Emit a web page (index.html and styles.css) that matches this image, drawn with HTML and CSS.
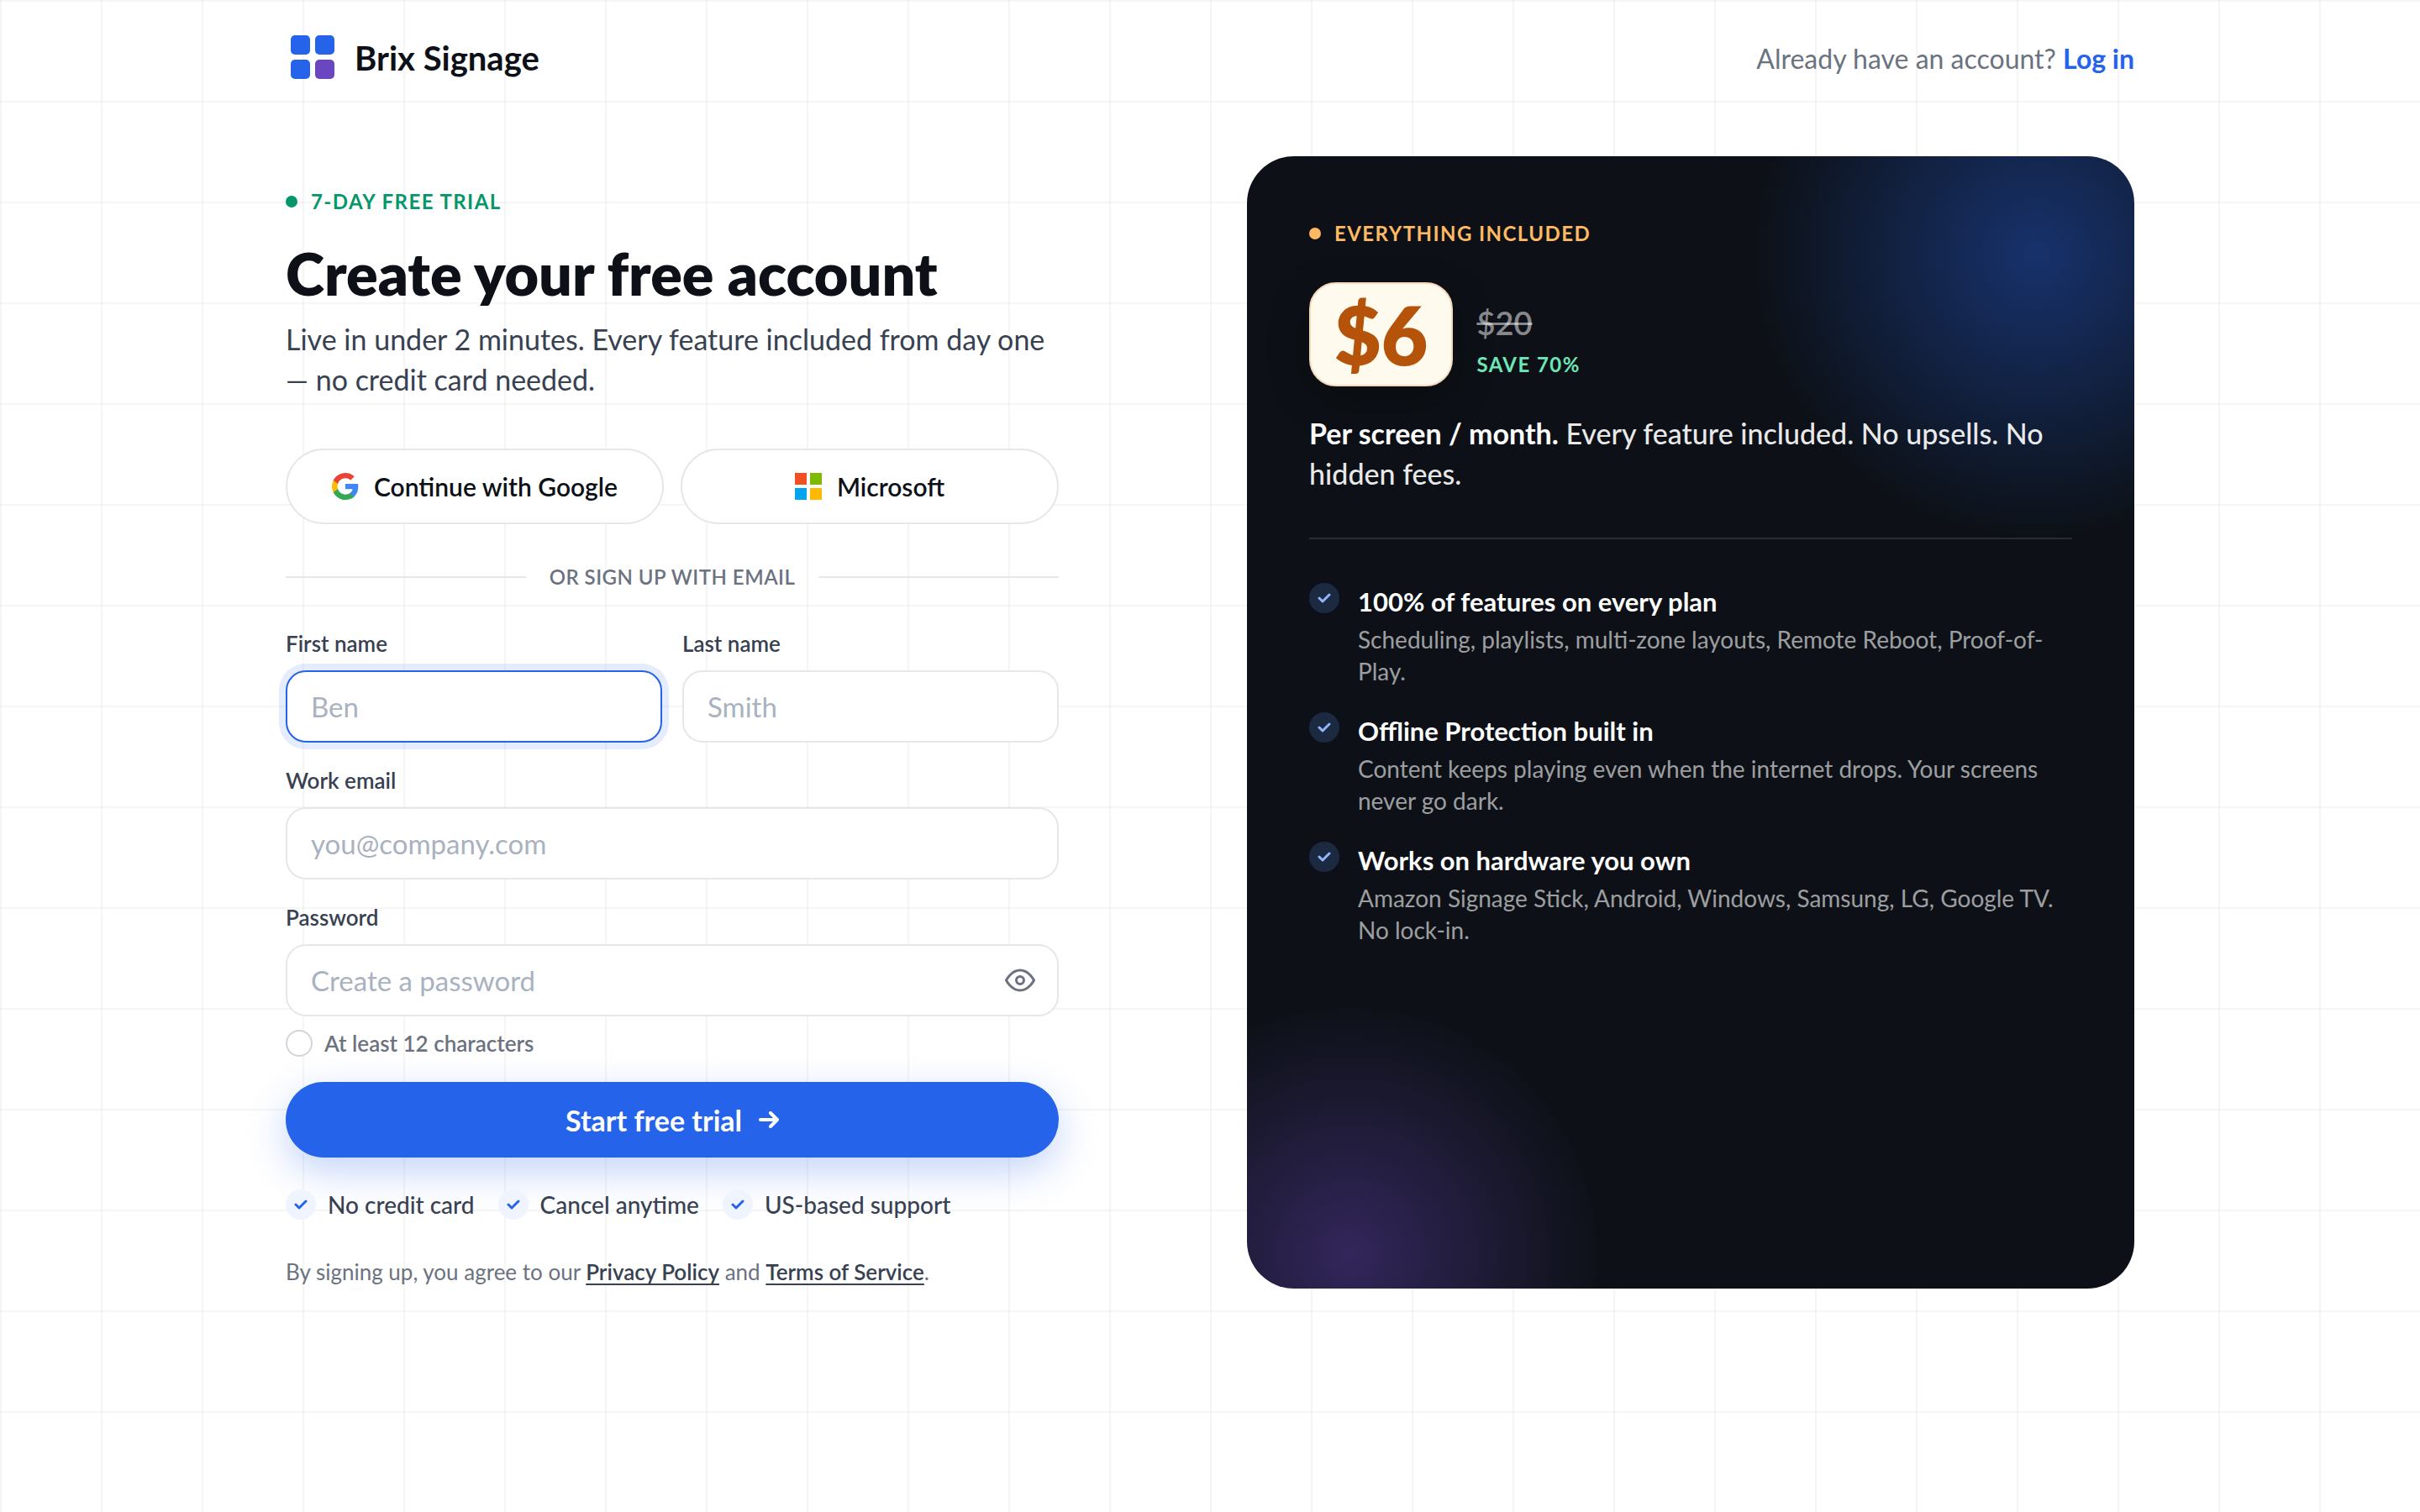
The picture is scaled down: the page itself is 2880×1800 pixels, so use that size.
FILE: index.html
```html
<!DOCTYPE html>
<html lang="en">

<head>
    <meta charset="utf-8">
    <title>Brix Signage - Create your free account</title>
    <meta name="viewport" content="width=device-width, initial-scale=1">
    <link rel="stylesheet" href="styles.css">
</head>

<body>

    <header class="header container">
        <a class="brand" href="#">
            <svg class="brand-logo" viewBox="0 0 64 64" aria-hidden="true">
                <rect x="6" y="5" width="23" height="23" rx="5" fill="#2563eb"/>
                <rect x="35" y="5" width="23" height="23" rx="5" fill="#2563eb"/>
                <rect x="6" y="34" width="23" height="23" rx="5" fill="#2563eb"/>
                <rect x="35" y="34" width="23" height="23" rx="5" fill="#6b46c1"/>
            </svg>
            Brix Signage
        </a>
        <p class="header-login">Already have an account? <a href="#">Log in</a></p>
    </header>

    <main class="signup container">
        <section class="signup-main">
            <p class="eyebrow eyebrow-green">7-DAY FREE TRIAL</p>
            <h1>Create your free account</h1>
            <p class="lead">Live in under 2 minutes. Every feature included from day one — no credit card needed.</p>

            <div class="oauth">
                <button type="button" class="btn-oauth">
                    <svg viewBox="1 1 22 22" aria-hidden="true">
                        <path fill="#4285F4" d="M22.56 12.25c0-.78-.07-1.53-.2-2.25H12v4.26h5.92c-.26 1.37-1.04 2.53-2.21 3.31v2.77h3.57c2.08-1.92 3.28-4.74 3.28-8.09z"/>
                        <path fill="#34A853" d="M12 23c2.97 0 5.46-.98 7.28-2.66l-3.57-2.77c-.98.66-2.23 1.06-3.71 1.06-2.86 0-5.29-1.93-6.16-4.53H2.18v2.84C3.99 20.53 7.7 23 12 23z"/>
                        <path fill="#FBBC05" d="M5.84 14.09c-.22-.66-.35-1.36-.35-2.09s.13-1.43.35-2.09V7.07H2.18C1.43 8.55 1 10.22 1 12s.43 3.45 1.18 4.93l2.85-2.22.81-.62z"/>
                        <path fill="#EA4335" d="M12 5.38c1.62 0 3.06.56 4.21 1.64l3.15-3.15C17.45 2.09 14.97 1 12 1 7.7 1 3.99 3.47 2.18 7.07l3.66 2.84c.87-2.6 3.3-4.53 6.16-4.53z"/>
                    </svg>
                    Continue with Google
                </button>
                <button type="button" class="btn-oauth">
                    <svg viewBox="0 0 32 32" aria-hidden="true">
                        <path fill="#f25022" d="M0 0h14v14H0z"/>
                        <path fill="#7fba00" d="M18 0h14v14H18z"/>
                        <path fill="#00a4ef" d="M0 18h14v14H0z"/>
                        <path fill="#ffb900" d="M18 18h14v14H18z"/>
                    </svg>
                    Microsoft
                </button>
            </div>

            <div class="divider">OR SIGN UP WITH EMAIL</div>

            <form action="">
                <div class="fields">
                    <div class="field-row">
                        <div class="field">
                            <label for="first-name">First name</label>
                            <input class="active" type="text" id="first-name" placeholder="Ben">
                        </div>
                        <div class="field">
                            <label for="last-name">Last name</label>
                            <input type="text" id="last-name" placeholder="Smith">
                        </div>
                    </div>
                    <div class="field">
                        <label for="email">Work email</label>
                        <input type="email" id="email" placeholder="you@company.com">
                    </div>
                    <div class="field">
                        <label for="password">Password</label>
                        <div class="password">
                            <input type="password" id="password" placeholder="Create a password">
                            <button type="button" class="password-toggle" aria-label="Show password">
                                <svg viewBox="0 0 24 24" fill="none" stroke="currentColor" stroke-width="2" stroke-linecap="round" stroke-linejoin="round">
                                    <path d="M1 12s4-8 11-8 11 8 11 8-4 8-11 8-11-8-11-8z"/>
                                    <circle cx="12" cy="12" r="3"/>
                                </svg>
                            </button>
                        </div>
                    </div>
                </div>

                <p class="requirement">At least 12 characters</p>

                <button class="btn-submit">
                    Start free trial
                    <svg viewBox="0 0 24 20" fill="none" stroke="currentColor" stroke-width="4" stroke-linecap="round" stroke-linejoin="round" aria-hidden="true">
                        <path d="M2 10h20M14 2l8 8-8 8"/>
                    </svg>
                </button>
            </form>

            <ul class="trust">
                <li><span class="check"><svg viewBox="0 0 16 12"><path d="M2 6l4 4 8-8"/></svg></span>No credit card</li>
                <li><span class="check"><svg viewBox="0 0 16 12"><path d="M2 6l4 4 8-8"/></svg></span>Cancel anytime</li>
                <li><span class="check"><svg viewBox="0 0 16 12"><path d="M2 6l4 4 8-8"/></svg></span>US-based support</li>
            </ul>

            <p class="legal">By signing up, you agree to our <a href="#">Privacy Policy</a> and <a href="#">Terms of Service</a>.</p>
        </section>

        <aside class="offer">
            <p class="eyebrow eyebrow-amber">EVERYTHING INCLUDED</p>
            <div class="price">
                <div class="price-badge">$6</div>
                <div class="price-side">
                    <s>$20</s>
                    <span class="price-save">SAVE 70%</span>
                </div>
            </div>
            <p class="offer-text"><strong>Per screen / month.</strong> Every feature included. No upsells. No hidden fees.</p>
            <ul class="features">
                <li>
                    <span class="check check-dark"><svg viewBox="0 0 16 12"><path d="M2 6l4 4 8-8"/></svg></span>
                    <div>
                        <h2>100% of features on every plan</h2>
                        <p>Scheduling, playlists, multi-zone layouts, Remote Reboot, Proof-of-Play.</p>
                    </div>
                </li>
                <li>
                    <span class="check check-dark"><svg viewBox="0 0 16 12"><path d="M2 6l4 4 8-8"/></svg></span>
                    <div>
                        <h2>Offline Protection built in</h2>
                        <p>Content keeps playing even when the internet drops. Your screens never go dark.</p>
                    </div>
                </li>
                <li>
                    <span class="check check-dark"><svg viewBox="0 0 16 12"><path d="M2 6l4 4 8-8"/></svg></span>
                    <div>
                        <h2>Works on hardware you own</h2>
                        <p>Amazon Signage Stick, Android, Windows, Samsung, LG, Google TV. No lock-in.</p>
                    </div>
                </li>
            </ul>
        </aside>
    </main>

</body>

</html>
```
FILE: styles.css
```css
*,
*::before,
*::after {
    margin: 0;
    padding: 0;
    box-sizing: border-box;
}

body {
    font-family: Lato, "Open Sans", sans-serif;
    font-size: 32px;
    color: #0d1117;
    min-height: 100vh;
    background-color: #ffffff;
    background-image:
        linear-gradient(rgba(13, 17, 23, 0.04) 2px, transparent 2px),
        linear-gradient(90deg, rgba(13, 17, 23, 0.04) 2px, transparent 2px);
    background-size: 120px 120px;
}

ul {
    list-style: none;
}

button,
input {
    font-family: inherit;
}

button {
    cursor: pointer;
}

.container {
    width: 100%;
    max-width: 2280px;
    margin: 0 auto;
    padding: 0 40px;
}

/* header */

.header {
    display: flex;
    align-items: center;
    justify-content: space-between;
    height: 138px;
}

.brand {
    display: flex;
    align-items: center;
    gap: 18px;
    font-size: 40px;
    font-weight: 700;
    color: #0d1117;
    text-decoration: none;
}

.brand-logo {
    width: 64px;
    height: 64px;
}

.header-login {
    color: #6b7280;
}

.header-login a {
    color: #2563eb;
    font-weight: 700;
    text-decoration: none;
}

/* layout */

.signup {
    display: grid;
    grid-template-columns: 1fr 1fr;
    gap: 88px;
    padding-top: 48px;
    padding-bottom: 48px;
}

.signup-main {
    width: 100%;
    max-width: 920px;
    padding-top: 36px;
}

.eyebrow {
    display: flex;
    align-items: center;
    gap: 16px;
    font-size: 24px;
    line-height: 36px;
    font-weight: 700;
    letter-spacing: 0.06em;
}

.eyebrow::before {
    content: "";
    width: 14px;
    height: 14px;
    border-radius: 50%;
    background: currentColor;
}

.eyebrow-green {
    color: #059669;
}

.eyebrow-amber {
    color: #fdba62;
}

h1 {
    margin-top: 24px;
    font-size: 70px;
    line-height: 86px;
    font-weight: 800;
}

.lead {
    margin-top: 12px;
    font-size: 34px;
    line-height: 48px;
    color: #374151;
}

/* sign in buttons */

.oauth {
    display: grid;
    grid-template-columns: 1fr 1fr;
    gap: 20px;
    margin-top: 58px;
}

.btn-oauth {
    display: flex;
    align-items: center;
    justify-content: center;
    gap: 18px;
    height: 90px;
    border: 2px solid #e5e7eb;
    border-radius: 45px;
    background: #ffffff;
    font-size: 30px;
    font-weight: 600;
    color: #0d1117;
}

.btn-oauth svg {
    width: 32px;
    height: 32px;
}

.divider {
    display: flex;
    align-items: center;
    gap: 28px;
    margin: 45px 0 42px;
    font-size: 24px;
    line-height: 36px;
    font-weight: 600;
    letter-spacing: 0.02em;
    color: #6b7280;
}

.divider::before,
.divider::after {
    content: "";
    flex: 1;
    height: 2px;
    background: #e5e7eb;
}

/* form */

.fields {
    display: grid;
    gap: 26px;
}

.field-row {
    display: grid;
    grid-template-columns: 1fr 1fr;
    gap: 24px;
}

.field label {
    display: block;
    margin-bottom: 12px;
    font-size: 26px;
    line-height: 39px;
    font-weight: 600;
    color: #374151;
}

.field input {
    display: block;
    width: 100%;
    height: 86px;
    padding: 0 28px;
    border: 2px solid #e5e7eb;
    border-radius: 24px;
    background: #ffffff;
    font-size: 33px;
    color: #0d1117;
    outline: none;
}

.field input::placeholder {
    color: #a9b2c0;
}

.field input.active,
.field input:focus {
    border-color: #2563eb;
    box-shadow: 0 0 0 8px rgba(37, 99, 235, 0.12);
}

.password {
    position: relative;
}

.password-toggle {
    position: absolute;
    top: 0;
    right: 0;
    display: flex;
    align-items: center;
    height: 100%;
    padding: 0 28px;
    border: none;
    background: none;
    color: #6b7280;
}

.password-toggle svg {
    width: 36px;
    height: 36px;
}

.requirement {
    display: flex;
    align-items: center;
    gap: 14px;
    margin-top: 16px;
    font-size: 26px;
    line-height: 32px;
    font-weight: 600;
    color: #6b7280;
}

.requirement::before {
    content: "";
    width: 32px;
    height: 32px;
    border: 2px solid #d1d5db;
    border-radius: 50%;
    background: #ffffff;
}

.btn-submit {
    display: flex;
    align-items: center;
    justify-content: center;
    gap: 20px;
    width: 100%;
    height: 90px;
    margin-top: 30px;
    border: none;
    border-radius: 45px;
    background: #2563eb;
    box-shadow: 0 16px 48px rgba(37, 99, 235, 0.28);
    font-size: 34px;
    font-weight: 700;
    color: #ffffff;
}

.btn-submit svg {
    width: 24px;
    height: 20px;
}

/* trust row */

.trust {
    display: flex;
    flex-wrap: wrap;
    gap: 28px;
    margin-top: 38px;
}

.trust li {
    display: flex;
    align-items: center;
    gap: 14px;
    font-size: 28px;
    line-height: 36px;
    font-weight: 500;
    color: #374151;
}

.check {
    display: flex;
    align-items: center;
    justify-content: center;
    flex: none;
    width: 36px;
    height: 36px;
    border-radius: 50%;
    background: #eff4ff;
    color: #2563eb;
}

.check svg {
    width: 16px;
    height: 12px;
    fill: none;
    stroke: currentColor;
    stroke-width: 3;
    stroke-linecap: round;
    stroke-linejoin: round;
}

.check-dark {
    background: #1b2a40;
    color: #93b4ff;
}

.legal {
    margin-top: 42px;
    font-size: 26px;
    line-height: 40px;
    color: #6b7280;
}

.legal a {
    color: #374151;
    font-weight: 600;
    text-underline-offset: 4px;
}

/* offer card */

.offer {
    padding: 74px;
    border-radius: 56px;
    background:
        radial-gradient(circle 336px at calc(100% - 116px) 117px, rgba(37, 99, 235, 0.4), rgba(37, 99, 235, 0)),
        radial-gradient(circle 296px at 123px calc(100% - 41px), rgba(107, 70, 193, 0.4), rgba(107, 70, 193, 0)),
        #0d1117;
    color: #ffffff;
}

.price {
    display: flex;
    align-items: flex-end;
    gap: 28px;
    margin-top: 40px;
}

.price-badge {
    padding: 0 28px;
    border: 2px solid #f6d9bd;
    border-radius: 32px;
    background: #fffaee;
    box-shadow: 0 16px 48px rgba(0, 0, 0, 0.3);
    font-size: 96px;
    line-height: 120px;
    font-weight: 800;
    color: #b45309;
}

.price-side {
    display: flex;
    flex-direction: column;
    gap: 10px;
    padding-bottom: 8px;
}

.price-side s {
    font-size: 38px;
    line-height: 44px;
    font-weight: 600;
    color: rgba(255, 255, 255, 0.5);
}

.price-save {
    font-size: 24px;
    line-height: 36px;
    font-weight: 700;
    letter-spacing: 0.06em;
    color: #6ee7b7;
}

.offer-text {
    margin-top: 32px;
    font-size: 34px;
    line-height: 48px;
    font-weight: 500;
    color: rgba(255, 255, 255, 0.92);
}

.offer-text strong {
    font-weight: 700;
    color: #ffffff;
}

.features {
    display: grid;
    gap: 30px;
    margin-top: 52px;
    padding-top: 52px;
    border-top: 2px solid rgba(255, 255, 255, 0.12);
}

.features li {
    display: flex;
    gap: 22px;
}

.features h2 {
    padding-top: 2px;
    font-size: 31px;
    line-height: 40px;
    font-weight: 700;
}

.features p {
    margin-top: 6px;
    font-size: 28px;
    line-height: 38px;
    color: rgba(255, 255, 255, 0.6);
}
```
